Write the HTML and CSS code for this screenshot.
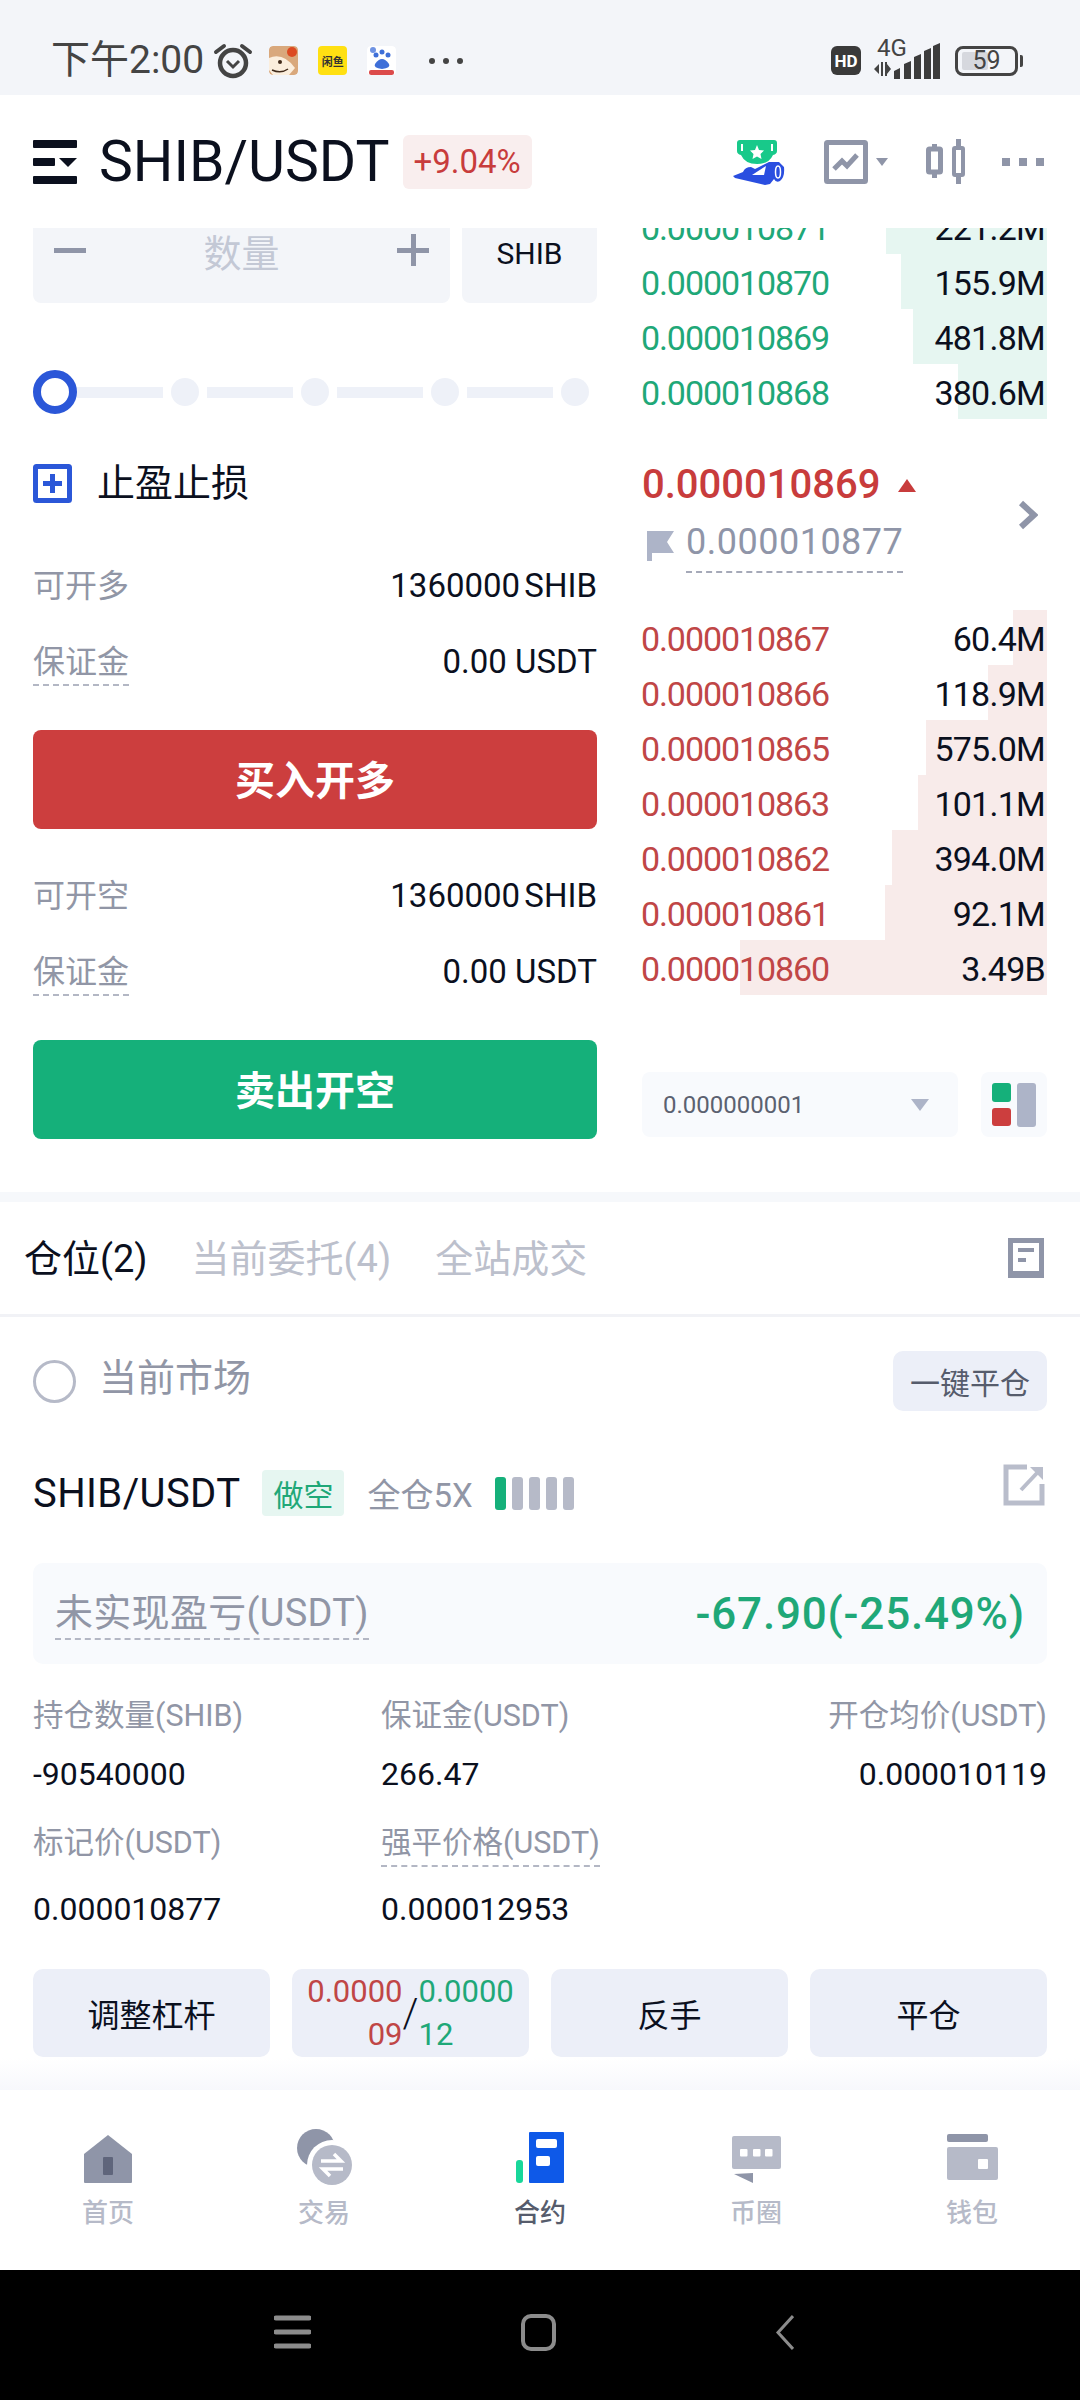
FILE: index.html
```html
<!DOCTYPE html>
<html lang="zh-CN">
<head>
  <meta charset="UTF-8">
  <meta name="viewport" content="width=device-width, initial-scale=1.0">
  <title>SHIB/USDT</title>
  <link rel="stylesheet" href="styles.css">
</head>
<body>

<div id="page">

  <div class="statusbar">
    <div class="status-left">
      <span class="clock">下午2:00</span>
      <svg class="alarm" width="40" height="36" viewBox="0 0 40 36"><circle cx="20" cy="20" r="13" fill="none" stroke="#444" stroke-width="4.5"/><path d="M3 9 L11 3 M37 9 L29 3" stroke="#444" stroke-width="4" stroke-linecap="round"/><path d="M14 18 L20 24 L26 18" fill="none" stroke="#444" stroke-width="3"/></svg>
      <svg class="app-ico" width="29" height="29" viewBox="0 0 29 29"><rect width="29" height="29" rx="4" fill="#d9a87c"/><path d="M0 12 Q14 6 26 22 L20 29 L4 29 L0 24Z" fill="#fbeedd"/><circle cx="23" cy="6" r="5" fill="#dc4a22"/><circle cx="11" cy="16" r="2" fill="#402a1a"/><path d="M3 24 Q12 28 19 23" fill="none" stroke="#402a1a" stroke-width="1.5"/></svg>
      <span class="xianyu"><span class="xianyu-txt">闲鱼</span></span>
      <svg class="app-ico" width="29" height="29" viewBox="0 0 29 29"><rect width="29" height="29" rx="4" fill="#fff"/><circle cx="9" cy="9" r="2.5" fill="#3e6fd8"/><circle cx="15" cy="6" r="2.5" fill="#3e6fd8"/><circle cx="21" cy="9" r="2.5" fill="#3e6fd8"/><circle cx="6" cy="4" r="3" fill="#6f93e3"/><path d="M8 18 Q15 8 22 18 Q24 22 15 23 Q6 22 8 18Z" fill="#3e6fd8"/><rect x="2" y="24" width="25" height="5" rx="2" fill="#dc4b4b"/></svg>
      <span class="more-dots"><i></i><i></i><i></i></span>
    </div>
    <div class="status-right">
      <span class="hd">HD</span>
      <span class="net">
        <span class="net-label">4G</span>
        <svg width="66" height="36" viewBox="0 0 66 36"><path d="M0 26 L5 21 V31Z M7 19 H9 V33 H7Z M11 19 H13 V33 H11Z M13 21 L17 26 L13 31Z" fill="#444"/><path d="M20 28 L26 25 V36 H20Z M30 21 L37 18 V36 H30Z M40 14 L47 11 V36 H40Z M50 8 L57 5 V36 H50Z M59 3 L66 0 V36 H59Z" fill="#3c3c3c"/></svg>
      </span>
      <span class="battery"><span class="battery-fill"></span><span class="battery-num">59</span></span>
      <span class="battery-tip"></span>
    </div>
  </div>

  <div class="header">
    <svg class="menu-ico" width="44" height="44" viewBox="0 0 44 44"><rect width="44" height="8" y="0" rx="1" fill="#0b101e"/><rect width="22" height="8" y="18" rx="1" fill="#0b101e"/><path d="M26 18 H44 L35 27Z" fill="#0b101e"/><rect width="44" height="8" y="36" rx="1" fill="#0b101e"/></svg>
    <span class="pair">SHIB/USDT</span>
    <span class="change">+9.04%</span>
    <div class="header-tools">
      <svg class="tool-trophy" width="52" height="46" viewBox="0 0 52 46"><path d="M7 1 H41 Q44 1 44 4 V12 Q44 15 40 16 Q36 25 24 25 Q12 25 8 16 Q4 15 4 12 V4 Q4 1 7 1Z" fill="#18c98a"/><path d="M8 5 H10 V12 H8Z M38 5 H40 V12 H38Z" fill="#fff"/><path d="M24 6 L26 11 L31 11.5 L27.5 15 L28.5 20 L24 17.5 L19.5 20 L20.5 15 L17 11.5 L22 11Z" fill="#fff"/><path d="M0 37 L10 33 Q12 28 18 28 L22 30 L36 23 L46 23 L51 28 Q52 38 47 42 Q43 44 41 40 L37 45 L32 46 L2 39Z" fill="#2a4ee0"/><path d="M19 36 L33 27 L31 36Z" fill="#fff"/><ellipse cx="45" cy="33" rx="2.5" ry="6" fill="none" stroke="#fff" stroke-width="1.5"/></svg>
      <div class="tool-chart">
        <svg width="44" height="44" viewBox="0 0 44 44"><rect x="2.5" y="2.5" width="39" height="39" fill="none" stroke="#8f95a8" stroke-width="5" rx="1"/><path d="M10 29 L18 21 L23 26 L33 15" fill="none" stroke="#8f95a8" stroke-width="5"/></svg>
        <span class="caret-gray"></span>
      </div>
      <svg class="tool-candle" width="39" height="45" viewBox="0 0 39 45"><rect x="2.5" y="10" width="12" height="23" rx="1" fill="none" stroke="#8f95a8" stroke-width="5"/><rect x="6" y="5" width="5" height="6" fill="#8f95a8"/><rect x="6" y="33" width="5" height="6" fill="#8f95a8"/><rect x="28" y="9" width="9" height="27" rx="1" fill="none" stroke="#8f95a8" stroke-width="4"/><rect x="30" y="0" width="5" height="9" fill="#8f95a8"/><rect x="30" y="36" width="5" height="9" fill="#8f95a8"/></svg>
      <span class="tool-dots"><i></i><i></i><i></i></span>
    </div>
  </div>

  <div class="scroll">
    <div class="scroll-inner">

      <div class="trade">
        <div class="form">
          <div class="qty-row">
            <div class="qty-box">
              <svg width="32" height="32" viewBox="0 0 32 32"><rect y="14" width="32" height="5" fill="#8f95a8"/></svg>
              <span class="qty-ph">数量</span>
              <svg width="32" height="32" viewBox="0 0 32 32"><rect y="14" width="32" height="5" fill="#8f95a8"/><rect x="14" width="5" height="32" fill="#8f95a8"/></svg>
            </div>
            <div class="qty-unit">SHIB</div>
          </div>

          <div class="slider">
            <span class="knob"></span>
            <span class="track"></span><span class="dot"></span>
            <span class="track"></span><span class="dot"></span>
            <span class="track"></span><span class="dot"></span>
            <span class="track"></span><span class="dot"></span>
          </div>

          <div class="tpsl">
            <svg width="39" height="39" viewBox="0 0 39 39"><rect x="2.5" y="2.5" width="34" height="34" rx="1" fill="none" stroke="#2b57d8" stroke-width="5"/><path d="M19.5 10 V29 M10 19.5 H29" stroke="#2b57d8" stroke-width="5"/></svg>
            <span>止盈止损</span>
          </div>

          <div class="info-row info-first"><span class="info-label">可开多</span><span class="info-val tight">1360000 SHIB</span></div>
          <div class="info-row"><span class="info-label dashed">保证金</span><span class="info-val">0.00 USDT</span></div>
          <div class="action buy">买入开多</div>

          <div class="info-row info-first"><span class="info-label">可开空</span><span class="info-val tight">1360000 SHIB</span></div>
          <div class="info-row"><span class="info-label dashed">保证金</span><span class="info-val">0.00 USDT</span></div>
          <div class="action sell">卖出开空</div>
        </div>

        <div class="book">
          <div class="book-rows asks">
            <div class="book-row green"><i style="width:161px"></i><span>0.000010871</span><b>221.2M</b></div>
            <div class="book-row green"><i style="width:146px"></i><span>0.000010870</span><b>155.9M</b></div>
            <div class="book-row green"><i style="width:134px"></i><span>0.000010869</span><b>481.8M</b></div>
            <div class="book-row green"><i style="width:89px"></i><span>0.000010868</span><b>380.6M</b></div>
          </div>

          <div class="mid">
            <div class="mid-text">
              <div class="last"><span>0.000010869</span><span class="up"></span></div>
              <div class="mark">
                <svg width="27" height="32" viewBox="0 0 27 32"><path d="M0 2 H27 L20 13 L27 24 H5 V32 H0Z" fill="#adb4c8"/></svg>
                <span class="mark-val">0.000010877</span>
              </div>
            </div>
            <svg width="20" height="30" viewBox="0 0 20 30"><path d="M3 3 L16 15 L3 27" fill="none" stroke="#8f95a8" stroke-width="6"/></svg>
          </div>

          <div class="book-rows bids">
            <div class="book-row red"><i style="width:34px"></i><span>0.000010867</span><b>60.4M</b></div>
            <div class="book-row red"><i style="width:59px"></i><span>0.000010866</span><b>118.9M</b></div>
            <div class="book-row red"><i style="width:121px"></i><span>0.000010865</span><b>575.0M</b></div>
            <div class="book-row red"><i style="width:129px"></i><span>0.000010863</span><b>101.1M</b></div>
            <div class="book-row red"><i style="width:155px"></i><span>0.000010862</span><b>394.0M</b></div>
            <div class="book-row red"><i style="width:162px"></i><span>0.000010861</span><b>92.1M</b></div>
            <div class="book-row red"><i style="width:307px"></i><span>0.000010860</span><b>3.49B</b></div>
          </div>

          <div class="book-foot">
            <div class="depth"><span>0.000000001</span><span class="caret-light"></span></div>
            <div class="layout-btn">
              <div class="layout-left"><i class="sq-green"></i><i class="sq-red"></i></div>
              <i class="sq-gray"></i>
            </div>
          </div>
        </div>
      </div>

      <div class="band"></div>

      <div class="tabs">
        <span class="tab active">仓位(2)</span>
        <span class="tab">当前委托(4)</span>
        <span class="tab">全站成交</span>
        <svg class="tabs-ico" width="36" height="40" viewBox="0 0 36 40"><path d="M2.5 37 V2.5 H33.5 V37" fill="none" stroke="#8f95a8" stroke-width="5"/><rect y="33" width="36" height="7" fill="#8f95a8"/><path d="M10 12 H26 M10 22 H18" stroke="#8f95a8" stroke-width="4"/></svg>
      </div>

      <div class="filter">
        <span class="radio"></span>
        <span class="filter-text">当前市场</span>
        <span class="close-all">一键平仓</span>
      </div>

      <div class="pos-head">
        <span class="pos-pair">SHIB/USDT</span>
        <span class="side">做空</span>
        <span class="lever">全仓5X</span>
        <span class="risk"><i class="on"></i><i></i><i></i><i></i><i></i></span>
        <svg class="share" width="42" height="42" viewBox="0 0 42 42"><path d="M24 3 H3 V39 H39 V20" fill="none" stroke="#b9bdcb" stroke-width="5"/><path d="M27 3 H40 V16 Z" fill="#b9bdcb"/><path d="M34 9 L18 26" stroke="#b9bdcb" stroke-width="4"/></svg>
      </div>

      <div class="pnl">
        <span class="pnl-label">未实现盈亏(USDT)</span>
        <span class="pnl-val">-67.90(-25.49%)</span>
      </div>

      <div class="stats">
        <div class="stat"><span class="stat-label">持仓数量(SHIB)</span><span class="stat-val">-90540000</span></div>
        <div class="stat"><span class="stat-label">保证金(USDT)</span><span class="stat-val">266.47</span></div>
        <div class="stat stat-end"><span class="stat-label">开仓均价(USDT)</span><span class="stat-val">0.000010119</span></div>
        <div class="stat stat-low"><span class="stat-label">标记价(USDT)</span><span class="stat-val">0.000010877</span></div>
        <div class="stat stat-low"><span class="stat-label dashed">强平价格(USDT)</span><span class="stat-val">0.000012953</span></div>
      </div>

      <div class="pos-btns">
        <div class="pos-btn">调整杠杆</div>
        <div class="pos-btn tpsl-btn">
          <span class="tp-red">0.0000<br>09</span><span class="tp-slash">/</span><span class="tp-green">0.0000<br>12</span>
        </div>
        <div class="pos-btn">反手</div>
        <div class="pos-btn">平仓</div>
      </div>
    </div>
    <div class="scroll-fade"></div>
  </div>

  <div class="tabbar">
    <div class="tabbar-item">
      <div class="nav-ico"><svg width="48" height="48" viewBox="0 0 48 48"><path d="M0 19 L24 0 L48 19 V47 Q48 48 47 48 H1 Q0 48 0 47Z" fill="#8f95a8"/><rect x="19" y="22" width="10" height="18" rx="1" fill="#5f657b"/></svg></div>
      <span>首页</span>
    </div>
    <div class="tabbar-item">
      <div class="nav-ico sink"><svg width="55" height="56" viewBox="0 0 55 56"><circle cx="19" cy="19" r="19" fill="#8f95a8"/><circle cx="35" cy="36" r="25" fill="#fff"/><circle cx="35" cy="36" r="20" fill="#b6bac8"/><path d="M24 32 H44 L37 25 M46 40 H26 L33 47" fill="none" stroke="#fff" stroke-width="3.5"/></svg></div>
      <span>交易</span>
    </div>
    <div class="tabbar-item active">
      <div class="nav-ico"><svg width="48" height="51" viewBox="0 0 48 51"><rect x="0" y="28" width="7" height="23" rx="3" fill="#18d79a"/><rect x="13" y="0" width="35" height="51" rx="1" fill="#0e59e8"/><rect x="20" y="7" width="21" height="9" rx="2" fill="#fff"/><rect x="20" y="24" width="14" height="10" rx="2" fill="#fff"/></svg></div>
      <span>合约</span>
    </div>
    <div class="tabbar-item">
      <div class="nav-ico"><svg width="49" height="47" viewBox="0 0 49 47"><rect width="49" height="33" rx="2" fill="#b6bac8"/><rect x="8" y="13" width="7.5" height="7.5" rx="1" fill="#fff"/><rect x="21" y="13" width="7.5" height="7.5" rx="1" fill="#fff"/><rect x="33" y="13" width="7.5" height="7.5" rx="1" fill="#fff"/><path d="M2 38 L21 37 V47Z" fill="#8f95a8"/></svg></div>
      <span>币圈</span>
    </div>
    <div class="tabbar-item">
      <div class="nav-ico"><svg width="51" height="49" viewBox="0 0 51 49"><rect width="41" height="8" rx="2" fill="#8f95a8"/><rect y="13" width="51" height="33" rx="2" fill="#b6bac8"/><rect x="31" y="25" width="10" height="10" rx="1" fill="#fff"/></svg></div>
      <span>钱包</span>
    </div>
  </div>

  <div class="sysnav">
    <svg width="37" height="34" viewBox="0 0 37 34"><path d="M2 3 H35 M2 17 H35 M2 31 H35" stroke="#8c8c8c" stroke-width="5" stroke-linecap="round"/></svg>
    <svg width="35" height="37" viewBox="0 0 35 37"><rect x="2" y="2" width="31" height="33" rx="8" fill="none" stroke="#8c8c8c" stroke-width="4"/></svg>
    <svg width="19" height="35" viewBox="0 0 19 35"><path d="M18 1 L3 17.5 L18 34" fill="none" stroke="#8c8c8c" stroke-width="3"/></svg>
  </div>

</div>

</body>
</html>
```

FILE: styles.css
```css
* {
  box-sizing: border-box;
}

html, body {
  margin: 0;
  padding: 0;
}

body {
  font-family: Roboto, "Noto Sans CJK SC", sans-serif;
  color: #0b101e;
  background: #fff;
}

svg {
  display: block;
  flex: none;
}

i {
  display: block;
}

#page {
  width: 1080px;
  height: 2400px;
  display: flex;
  flex-direction: column;
  overflow: hidden;
}

/* status bar */
.statusbar {
  height: 95px;
  flex: none;
  background: #f3f5f9;
  display: flex;
  justify-content: space-between;
  align-items: center;
  padding: 0 57px 0 51px;
  color: #444;
}

.status-left,
.status-right {
  display: flex;
  align-items: center;
  padding-top: 26px;
}

.clock {
  font-size: 39px;
  line-height: 1;
  margin-right: 9px;
}

.alarm {
  margin-right: 16px;
}

.app-ico {
  border-radius: 4px;
}

.xianyu {
  width: 29px;
  height: 29px;
  margin: 0 20px;
  background: #ffe012;
  border-radius: 4px;
  display: flex;
  align-items: center;
  justify-content: center;
  overflow: hidden;
}

.xianyu-txt {
  font-size: 11px;
  font-weight: 700;
  color: #333;
  white-space: nowrap;
}

.more-dots {
  display: flex;
  gap: 8px;
  margin-left: 33px;
}

.more-dots i {
  width: 6px;
  height: 6px;
  border-radius: 50%;
  background: #444;
}

.hd {
  width: 30px;
  height: 29px;
  border-radius: 6px;
  background: #3a3a3a;
  color: #fff;
  font-size: 17px;
  font-weight: 700;
  display: flex;
  align-items: center;
  justify-content: center;
  margin-right: 13px;
}

.net {
  position: relative;
  width: 66px;
  height: 36px;
  margin-right: 15px;
}

.net-label {
  position: absolute;
  left: 3px;
  top: -7px;
  font-size: 24px;
  line-height: 1;
  color: #444;
}

.battery {
  position: relative;
  width: 63px;
  height: 30px;
  border: 3px solid #444;
  border-radius: 8px;
  display: flex;
  align-items: center;
  justify-content: center;
}

.battery-fill {
  position: absolute;
  left: 4px;
  top: 3px;
  bottom: 3px;
  width: 26px;
  border-radius: 2px;
  background: #d6d8de;
}

.battery-num {
  position: relative;
  font-size: 25px;
  line-height: 1;
}

.battery-tip {
  width: 3px;
  height: 12px;
  margin-left: 2px;
  border-radius: 0 2px 2px 0;
  background: #444;
}

/* header */
.header {
  height: 133px;
  flex: none;
  display: flex;
  align-items: center;
  padding: 0 36px 0 33px;
  background: #fff;
}

.menu-ico {
  margin-right: 22px;
}

.pair {
  font-size: 57px;
  line-height: 1;
  margin-right: 13px;
}

.change {
  height: 54px;
  padding: 0 11px;
  background: #f9eeee;
  color: #c83c3c;
  font-size: 33px;
  border-radius: 6px;
  display: flex;
  align-items: center;
}

.header-tools {
  margin-left: auto;
  display: flex;
  align-items: center;
}

.tool-trophy {
  margin-right: 39px;
}

.tool-chart {
  display: flex;
  align-items: center;
  gap: 8px;
  margin-right: 38px;
}

.caret-gray {
  width: 0;
  height: 0;
  border-left: 6px solid transparent;
  border-right: 6px solid transparent;
  border-top: 8px solid #8f95a8;
}

.tool-candle {
  margin-right: 37px;
}

.tool-dots {
  display: flex;
  gap: 9px;
}

.tool-dots i {
  width: 8px;
  height: 8px;
  background: #8f95a8;
}

/* scroll area */
.scroll {
  flex: 1;
  position: relative;
  overflow: hidden;
}

.scroll-inner {
  margin-top: -31px;
}

.scroll-fade {
  position: absolute;
  left: 0;
  right: 0;
  bottom: 0;
  height: 32px;
  background: linear-gradient(to bottom, rgba(247, 248, 252, 0), #f7f8fc);
}

.trade {
  display: flex;
  justify-content: space-between;
  padding: 0 33px;
}

.form {
  width: 564px;
}

.qty-row {
  display: flex;
  gap: 12px;
}

.qty-box {
  width: 417px;
  height: 106px;
  border-radius: 8px;
  background: #f3f5f9;
  display: flex;
  align-items: center;
  justify-content: space-between;
  padding: 0 21px;
}

.qty-ph {
  font-size: 38px;
  color: #c3c8d5;
}

.qty-unit {
  width: 135px;
  height: 106px;
  padding-top: 35px;
  text-align: center;
  border-radius: 8px;
  background: #f3f5f9;
  font-size: 30px;
  line-height: 44px;
}

/* slider */
.slider {
  display: flex;
  align-items: center;
  margin-top: 67px;
  height: 44px;
}

.knob {
  width: 44px;
  height: 44px;
  flex: none;
  border: 8px solid #2b57d8;
  border-radius: 50%;
}

.track {
  flex: 1;
  height: 11px;
  background: #eef1f8;
  margin: 0 8px 0 0;
}

.dot {
  width: 28px;
  height: 28px;
  flex: none;
  border-radius: 50%;
  background: #eef1f8;
  margin-right: 8px;
}

.tpsl {
  display: flex;
  align-items: center;
  gap: 25px;
  margin-top: 50px;
  font-size: 38px;
  line-height: 39px;
}

.info-row {
  display: flex;
  justify-content: space-between;
  align-items: baseline;
  height: 76px;
  padding-top: 16px;
}

.info-first {
  margin-top: 61px;
  height: 60px;
  padding-top: 0;
}

.action + .info-first {
  margin-top: 45px;
}

.info-label {
  font-size: 32px;
  line-height: 44px;
  color: #9196a6;
}

.info-val {
  font-size: 33px;
  line-height: 44px;
}

.tight {
  word-spacing: -4px;
}

.dashed {
  border-bottom: 2px dashed #b3b7c4;
}

.action {
  height: 99px;
  margin-top: 30px;
  padding-bottom: 4px;
  border-radius: 8px;
  color: #fff;
  font-size: 40px;
  font-weight: 700;
  display: flex;
  align-items: center;
  justify-content: center;
}

.buy {
  background: #cc3e3e;
}

.sell {
  background: #15b07a;
}

/* order book */
.book {
  width: 405px;
  padding-top: 2px;
}

.book-row {
  position: relative;
  height: 55px;
  padding-top: 2px;
  display: flex;
  justify-content: space-between;
  align-items: center;
  font-size: 34px;
  letter-spacing: -0.75px;
}

.book-row i {
  position: absolute;
  right: 0;
  top: 0;
  bottom: 0;
}

.book-row span,
.book-row b {
  position: relative;
  font-weight: 400;
}

.book-row span {
  letter-spacing: -1.1px;
  margin-left: -1px;
}

.book-row b {
  margin-right: 2px;
}

.green span {
  color: #1fa878;
}

.green i {
  background: #e6f6f1;
}

.red span {
  color: #c04646;
}

.red i {
  background: #f8ebea;
}

.mid {
  display: flex;
  justify-content: space-between;
  align-items: center;
  height: 191px;
  padding: 0 9px 0 0;
}

.mid-text {
  padding-top: 6px;
}

.last {
  display: flex;
  align-items: center;
  gap: 18px;
  font-size: 40px;
  font-weight: 500;
  line-height: 46px;
  color: #c83c3c;
}

.up {
  width: 0;
  height: 0;
  border-left: 9px solid transparent;
  border-right: 9px solid transparent;
  border-bottom: 13px solid #c83c3c;
}

.mark {
  display: flex;
  align-items: center;
  gap: 12px;
  margin: 9px 0 0 5px;
}

.mark-val {
  font-size: 36px;
  line-height: 50px;
  padding-bottom: 4px;
  letter-spacing: 0.5px;
  color: #8f95a8;
  border-bottom: 2px dashed #a5a9b8;
}

.book-foot {
  display: flex;
  justify-content: space-between;
  margin-top: 77px;
}

.depth {
  width: 316px;
  height: 65px;
  border-radius: 8px;
  background: #f8fafd;
  display: flex;
  align-items: center;
  justify-content: space-between;
  padding: 0 29px 0 21px;
  font-size: 24px;
  color: #5b6170;
}

.caret-light {
  width: 0;
  height: 0;
  border-left: 9px solid transparent;
  border-right: 9px solid transparent;
  border-top: 12px solid #adb4c8;
}

.layout-btn {
  width: 66px;
  height: 65px;
  border-radius: 8px;
  background: #f8fafd;
  display: flex;
  gap: 6px;
  padding: 11px;
}

.layout-left {
  display: flex;
  flex-direction: column;
  gap: 6px;
}

.sq-green,
.sq-red {
  width: 19px;
  height: 19px;
  border-radius: 3px;
}

.sq-green {
  background: #15b07a;
}

.sq-red {
  background: #cc3e3e;
}

.sq-gray {
  width: 19px;
  height: 44px;
  border-radius: 3px;
  background: #adb4c8;
}

.band {
  height: 10px;
  margin-top: 53px;
  background: #f6f8fb;
}

/* tabs */
.tabs {
  height: 115px;
  border-bottom: 3px solid #f1f2f6;
  display: flex;
  align-items: center;
  padding: 0 36px 0 24px;
  gap: 44px;
}

.tab {
  font-size: 38px;
  padding-bottom: 6px;
  color: #bcc0cc;
}

.tab.active {
  color: #0b101e;
}

.tabs-ico {
  margin-left: auto;
}

.filter {
  display: flex;
  align-items: center;
  padding: 34px 33px 0;
}

.radio {
  width: 43px;
  height: 43px;
  border: 3px solid #b6bac8;
  border-radius: 50%;
  margin-right: 23px;
}

.filter-text {
  font-size: 38px;
  line-height: 50px;
  padding-bottom: 6px;
  color: #9196a6;
}

.close-all {
  margin-left: auto;
  width: 154px;
  height: 60px;
  border-radius: 10px;
  background: #eceff8;
  color: #565c6c;
  font-size: 30px;
  display: flex;
  align-items: center;
  justify-content: center;
}

.pos-head {
  display: flex;
  align-items: center;
  padding: 0 35px 0 33px;
  margin-top: 58px;
}

.pos-pair {
  font-size: 40px;
  letter-spacing: 0.4px;
  margin-right: 22px;
}

.side {
  width: 82px;
  height: 46px;
  border-radius: 4px;
  background: #e6f6f1;
  color: #1fa878;
  font-size: 30px;
  display: flex;
  align-items: center;
  justify-content: center;
  margin-right: 23px;
}

.lever {
  font-size: 33px;
  color: #9196a6;
  margin-right: 22px;
}

.risk {
  display: flex;
  gap: 6px;
}

.risk i {
  width: 11px;
  height: 33px;
  border-radius: 3px;
  background: #b6bac8;
}

.risk i.on {
  background: #15b07a;
}

.share {
  margin: -16px 0 0 auto;
}

.pnl {
  height: 101px;
  margin: 46px 33px 0;
  padding: 0 22px;
  border-radius: 10px;
  background: #f8fafd;
  display: flex;
  align-items: center;
  justify-content: space-between;
}

.pnl-label {
  font-size: 38px;
  line-height: 50px;
  letter-spacing: 0.3px;
  color: #9196a6;
  border-bottom: 2px dashed #b3b7c4;
}

.pnl-val {
  font-size: 44px;
  font-weight: 500;
  letter-spacing: 0.8px;
  color: #1fa878;
}

.stats {
  display: grid;
  grid-template-columns: 348px 1fr auto;
  grid-row-gap: 25px;
  padding: 30px 33px 0;
}

.stat {
  display: flex;
  flex-direction: column;
  align-items: flex-start;
}

.stat-end {
  align-items: flex-end;
}

.stat-label {
  font-size: 30.5px;
  line-height: 44px;
  color: #9196a6;
}

.stat-val {
  font-size: 32px;
  line-height: 44px;
  margin-top: 14px;
}

.stat-low .stat-val {
  margin-top: 22px;
}

.stat-low .dashed + .stat-val {
  margin-top: 20px;
}

.pos-btns {
  display: grid;
  grid-template-columns: repeat(4, 1fr);
  gap: 22px;
  padding: 38px 33px 0;
}

.pos-btn {
  height: 88px;
  border-radius: 10px;
  background: #eceff8;
  font-size: 32px;
  display: flex;
  align-items: center;
  justify-content: center;
}

.tpsl-btn {
  font-size: 31px;
  line-height: 43px;
}

.tp-red {
  text-align: right;
  color: #c04646;
}

.tp-green {
  text-align: left;
  color: #1fa878;
}

.tp-slash {
  font-size: 40px;
  font-weight: 300;
}

/* bottom nav */
.tabbar {
  height: 180px;
  flex: none;
  background: #fff;
  display: grid;
  grid-template-columns: repeat(5, 216px);
}

.tabbar-item {
  display: flex;
  flex-direction: column;
  align-items: center;
  padding-top: 35px;
  gap: 15px;
  font-size: 26px;
  line-height: 30px;
  font-weight: 500;
  color: #b6bac8;
}

.tabbar-item.active {
  color: #565c6c;
}

.nav-ico {
  height: 58px;
  display: flex;
  align-items: flex-end;
}

.nav-ico.sink svg {
  margin-bottom: -2px;
}

.sysnav {
  height: 130px;
  flex: none;
  background: #000;
  display: grid;
  grid-template-columns: repeat(3, 246px);
  justify-content: center;
  justify-items: center;
  align-items: center;
  padding: 0 4px 6px 0;
}
```
